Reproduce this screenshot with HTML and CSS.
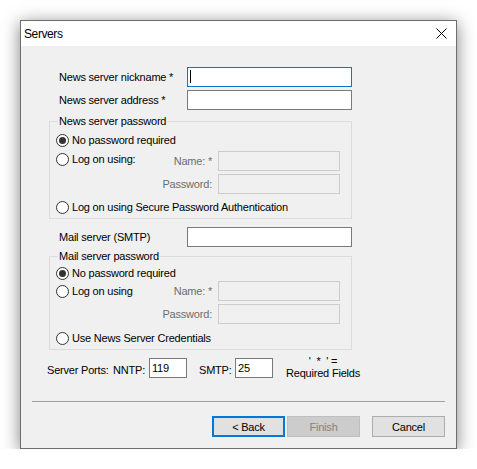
FILE: index.html
```html
<!DOCTYPE html>
<html>
<head>
<meta charset="utf-8">
<title>Servers</title>
<link rel="stylesheet" href="styles.css">
</head>
<body>
<div class="window">
  <div class="titlebar">
    <span class="title">Servers</span>
    <svg class="close" width="11" height="11" viewBox="0 0 11 11"><path d="M0.5 0.5L10.5 10.5M10.5 0.5L0.5 10.5" stroke="#000" stroke-width="1" fill="none"/></svg>
  </div>
  <div class="client">
    <div class="row">
      <span class="label">News server nickname *</span>
      <div class="textbox wide focused"><span class="caret"></span></div>
    </div>
    <div class="row row-tight">
      <span class="label">News server address *</span>
      <div class="textbox wide"></div>
    </div>

    <fieldset class="group group-news">
      <legend>News server password</legend>
      <div class="option opt-a"><span class="radio checked"></span>No password required</div>
      <div class="cred-row cred-name">
        <div class="option"><span class="radio"></span>Log on using:</div>
        <span class="sublabel">Name: *</span>
        <div class="textbox disabled"></div>
      </div>
      <div class="cred-row cred-pass">
        <span class="sublabel">Password:</span>
        <div class="textbox disabled"></div>
      </div>
      <div class="option opt-d"><span class="radio"></span>Log on using Secure Password Authentication</div>
    </fieldset>

    <div class="row row-smtp">
      <span class="label">Mail server (SMTP)</span>
      <div class="textbox wide"></div>
    </div>

    <fieldset class="group group-mail">
      <legend>Mail server password</legend>
      <div class="option opt-a"><span class="radio checked"></span>No password required</div>
      <div class="cred-row cred-name">
        <div class="option"><span class="radio"></span>Log on using</div>
        <span class="sublabel">Name: *</span>
        <div class="textbox disabled"></div>
      </div>
      <div class="cred-row cred-pass">
        <span class="sublabel">Password:</span>
        <div class="textbox disabled"></div>
      </div>
      <div class="option opt-d"><span class="radio"></span>Use News Server Credentials</div>
    </fieldset>

    <div class="ports">
      <span class="plabel plabel-ports">Server Ports:</span>
      <span class="plabel plabel-nntp">NNTP:</span>
      <div class="textbox port">119</div>
      <span class="plabel plabel-smtp">SMTP:</span>
      <div class="textbox port">25</div>
      <div class="required">' &nbsp;* &nbsp;' =<br>Required Fields</div>
    </div>

    <div class="separator"></div>

    <div class="buttons">
      <button class="btn btn-default">&lt; Back</button>
      <button class="btn btn-disabled">Finish</button>
      <button class="btn btn-cancel">Cancel</button>
    </div>
  </div>
</div>
</body>
</html>
```
FILE: styles.css
```css
* {
  box-sizing: border-box;
}

html,
body {
  margin: 0;
}

body {
  background: #ffffff;
  padding: 20px 0 0 20px;
  font-family: "Liberation Sans", Arial, sans-serif;
  font-size: 11px;
  letter-spacing: -0.2px;
  color: #000000;
}

.window {
  width: 437px;
  height: 429px;
  border: 1px solid #6d6d6d;
  background: #f0f0f0;
  box-shadow: 0 3px 16px rgba(0, 0, 0, 0.5);
  display: flex;
  flex-direction: column;
}

.titlebar {
  flex: none;
  height: 25px;
  background: #ffffff;
  display: flex;
  align-items: center;
  justify-content: space-between;
  padding: 0 9px 0 3px;
}

.title {
  font-size: 12px;
  letter-spacing: -0.4px;
}

.close {
  display: block;
}

.client {
  flex: 1;
  display: flex;
  flex-direction: column;
  padding-top: 21px;
}

.row {
  display: flex;
  align-items: center;
  height: 20px;
  padding-left: 38px;
}

.row-tight {
  margin-top: 3px;
}

.row-smtp {
  margin-top: 8px;
}

.label {
  width: 128px;
  white-space: nowrap;
}

.textbox {
  height: 20px;
  background: #ffffff;
  border: 1px solid #7a7a7a;
}

.textbox.wide {
  width: 165px;
}

.textbox.focused {
  border-color: #0078d7;
}

.caret {
  display: block;
  width: 1px;
  height: 13px;
  margin: 2px 0 0 2px;
  background: #000000;
}

.textbox.disabled {
  width: 122px;
  background: #f0f0f0;
  border-color: #cccccc;
}

.group {
  margin: 5px 0 0 28px;
  width: 303px;
  min-width: 0;
  padding: 0 11px 4px 6px;
  border: 1px solid #dcdcdc;
}

.group legend {
  padding: 0 1px;
  margin-left: 2px;
  line-height: 13px;
}

.group-mail {
  margin-top: 3px;
}

.option {
  display: flex;
  align-items: center;
  height: 14px;
  line-height: 14px;
  white-space: nowrap;
}

.radio {
  flex: none;
  width: 13px;
  height: 13px;
  margin-right: 3px;
  border: 1px solid #333333;
  border-radius: 50%;
  background: #ffffff;
  display: flex;
  align-items: center;
  justify-content: center;
}

.radio.checked::after {
  content: "";
  width: 7px;
  height: 7px;
  border-radius: 50%;
  background: #333333;
}

.cred-row {
  display: flex;
  align-items: center;
  justify-content: flex-end;
  height: 20px;
}

.cred-row .option {
  margin-right: auto;
  align-self: flex-start;
}

.sublabel {
  color: #6d6d6d;
  margin-right: 6px;
  white-space: nowrap;
}

.group-news .opt-a {
  margin-top: 5px;
}

.group-news .cred-name {
  margin-top: 4px;
}

.group-news .cred-name .option {
  margin-top: 1px;
}

.group-news .opt-d {
  margin-top: 6px;
}

.group-mail .opt-a {
  margin-top: 3px;
}

.group-mail .cred-name {
  margin-top: 1px;
}

.group-mail .cred-name .option {
  margin-top: 3px;
}

.group-mail .opt-d {
  margin-top: 7px;
}

.cred-pass {
  margin-top: 3px;
}

.ports {
  display: flex;
  align-items: flex-start;
  margin-top: 5px;
  padding-left: 26px;
  height: 24px;
}

.plabel {
  margin-top: 9px;
  line-height: 13px;
  white-space: nowrap;
}

.plabel-ports {
  width: 66px;
}

.plabel-nntp {
  width: 36px;
}

.plabel-smtp {
  width: 36px;
  margin-left: 12px;
}

.textbox.port {
  width: 38px;
  margin-top: 3px;
  padding: 0 2px;
  line-height: 18px;
}

.required {
  margin-left: 13px;
  width: 74px;
  text-align: center;
  line-height: 12px;
  white-space: nowrap;
}

.separator {
  height: 1px;
  margin: 22px 11px 0 11px;
  background: #a0a0a0;
}

.buttons {
  display: flex;
  justify-content: flex-end;
  gap: 2px;
  margin-top: 14px;
  padding-right: 11px;
}

.btn {
  width: 73px;
  height: 21px;
  padding: 0;
  margin: 0;
  font-family: inherit;
  font-size: 11px;
  letter-spacing: -0.2px;
  color: #000000;
  background: #e1e1e1;
  border: 1px solid #adadad;
}

.btn-default {
  border: 2px solid #0078d7;
}

.btn-disabled {
  background: #cccccc;
  border-color: #bfbfbf;
  color: #838383;
}

.btn-cancel {
  margin-left: 10px;
}
```
